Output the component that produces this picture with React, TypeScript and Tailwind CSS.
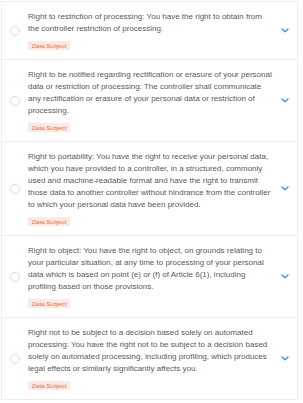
// Data subject rights list

type Right = { text: string };

const rights: Right[] = [
  {
    text: 'Right to restriction of processing: You have the right to obtain from the controller restriction of processing.',
  },
  {
    text: 'Right to be notified regarding rectification or erasure of your personal data or restriction of processing: The controller shall communicate any rectification or erasure of your personal data or restriction of processing.',
  },
  {
    text: 'Right to portability: You have the right to receive your personal data, which you have provided to a controller, in a structured, commonly used and machine-readable format and have the right to transmit those data to another controller without hindrance from the controller to which your personal data have been provided.',
  },
  {
    text: 'Right to object: You have the right to object, on grounds relating to your particular situation, at any time to processing of your personal data which is based on point (e) or (f) of Article 6(1), including profiling based on those provisions.',
  },
  {
    text: 'Right not to be subject to a decision based solely on automated processing: You have the right not to be subject to a decision based solely on automated processing, including profiling, which produces legal effects or similarly significantly affects you.',
  },
];

function Chevron() {
  return (
    <svg width="8" height="5" viewBox="0 0 8 5" className="shrink-0">
      <polyline points="1,1 4,3.8 7,1" fill="none" stroke="#3b8ee0" strokeWidth="1.3" strokeLinecap="round" strokeLinejoin="round" />
    </svg>
  );
}

function RightRow({ item }: { item: Right }) {
  return (
    <div className="flex items-center gap-[8px] pl-[8px] pr-[8px] pt-[9px] pb-[9px] bg-white">
      {/* radio */}
      <div className="w-[10px] h-[10px] shrink-0 rounded-full border border-[#dcdcdc] bg-white" />
      <div className="w-[245px] shrink-0 flex flex-col items-start">
        <p className="text-[8px] leading-[12px] text-[#595959]">{item.text}</p>
        <span className="mt-[6px] flex items-center h-[9px] px-[4px] bg-[#fde9e1] text-[#f06a3c] text-[6px] italic leading-none">
          Data Subject
        </span>
      </div>
      <div className="ml-auto flex items-center">
        <Chevron />
      </div>
    </div>
  );
}

export default function App() {
  return (
    <div className="w-[303px] h-[403px] bg-white overflow-hidden" style={{ fontFamily: '"Liberation Sans", Arial, sans-serif' }}>
      <div className="mt-[1px] ml-[1px] w-[297px] border border-[#eeeeee] divide-y divide-[#eeeeee]">
        {rights.map((r, i) => (
          <RightRow key={i} item={r} />
        ))}
      </div>
    </div>
  );
}
